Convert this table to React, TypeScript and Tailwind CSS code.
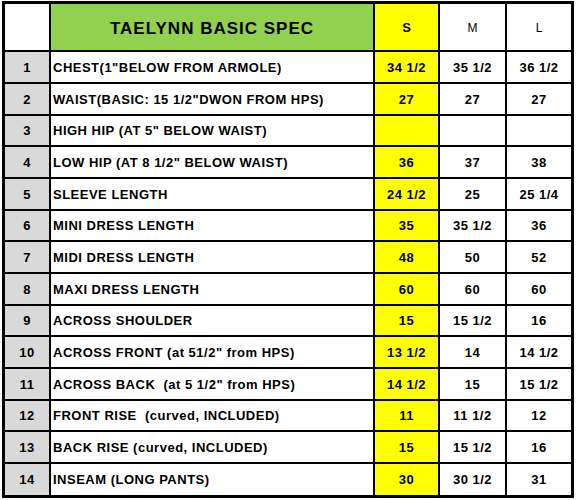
import React from 'react';

type Row = { label: string; s: string; m: string; l: string; h: string };

const rows: Row[] = [
  { label: 'CHEST(1"BELOW FROM ARMOLE)', s: '34 1/2', m: '35 1/2', l: '36 1/2', h: 'h-[32px]' },
  { label: 'WAIST(BASIC: 15 1/2"DWON FROM HPS)', s: '27', m: '27', l: '27', h: 'h-[32px]' },
  { label: 'HIGH HIP (AT 5" BELOW WAIST)', s: '', m: '', l: '', h: 'h-[31px]' },
  { label: 'LOW HIP (AT 8 1/2" BELOW WAIST)', s: '36', m: '37', l: '38', h: 'h-[32px]' },
  { label: 'SLEEVE LENGTH', s: '24 1/2', m: '25', l: '25 1/4', h: 'h-[32px]' },
  { label: 'MINI DRESS LENGTH', s: '35', m: '35 1/2', l: '36', h: 'h-[31px]' },
  { label: 'MIDI DRESS LENGTH', s: '48', m: '50', l: '52', h: 'h-[32px]' },
  { label: 'MAXI DRESS LENGTH', s: '60', m: '60', l: '60', h: 'h-[32px]' },
  { label: 'ACROSS SHOULDER', s: '15', m: '15 1/2', l: '16', h: 'h-[31px]' },
  { label: 'ACROSS FRONT (at 51/2" from HPS)', s: '13 1/2', m: '14', l: '14 1/2', h: 'h-[32px]' },
  { label: 'ACROSS BACK  (at 5 1/2" from HPS)', s: '14 1/2', m: '15', l: '15 1/2', h: 'h-[32px]' },
  { label: 'FRONT RISE  (curved, INCLUDED)', s: '11', m: '11 1/2', l: '12', h: 'h-[31px]' },
  { label: 'BACK RISE (curved, INCLUDED)', s: '15', m: '15 1/2', l: '16', h: 'h-[32px]' },
  { label: 'INSEAM (LONG PANTS)', s: '30', m: '30 1/2', l: '31', h: 'h-[31px]' },
];

const cols = 'grid grid-cols-[46px_324px_65px_67px_64px]';
const cell = 'flex items-center border-black';

export default function App() {
  return (
    <div className="bg-white w-[576px] h-[500px] pt-[1px] pl-[2px] font-['Liberation_Sans',Arial,sans-serif] text-black">
      <div className="w-[572px] border-[3px] border-black">
        <div className={`${cols} h-[48px]`}>
          <div className={`${cell} border-r-2 border-b-2 bg-white`} />
          <div className={`${cell} justify-center pt-[3px] border-r-2 border-b-2 bg-[#92d050] text-[17px] font-bold tracking-[1px]`}>
            TAELYNN BASIC SPEC
          </div>
          <div className={`${cell} justify-center pt-[2px] border-r-2 border-b-2 bg-[#ffff00] text-[13px] font-bold`}>S</div>
          <div className={`${cell} justify-center pt-[2px] border-r-2 border-b-2 text-[12px]`}>M</div>
          <div className={`${cell} justify-center pt-[2px] border-b-2 text-[12px]`}>L</div>
        </div>
        {rows.map((r, i) => {
          const b = i < rows.length - 1 ? 'border-b-2' : '';
          return (
            <div key={i} className={`${cols} ${r.h} text-[13px] font-bold tracking-[0.5px]`}>
              <div className={`${cell} justify-center pt-[1px] bg-[#d9d9d9] border-r-2 ${b}`}>{i + 1}</div>
              <div className={`${cell} pl-[2px] pt-[1px] whitespace-pre border-r-2 ${b}`}>{r.label}</div>
              <div className={`${cell} justify-center pt-[1px] bg-[#ffff00] border-r-2 ${b}`}>{r.s}</div>
              <div className={`${cell} justify-center pt-[1px] border-r-2 ${b}`}>{r.m}</div>
              <div className={`${cell} justify-center pt-[1px] ${b}`}>{r.l}</div>
            </div>
          );
        })}
      </div>
    </div>
  );
}
